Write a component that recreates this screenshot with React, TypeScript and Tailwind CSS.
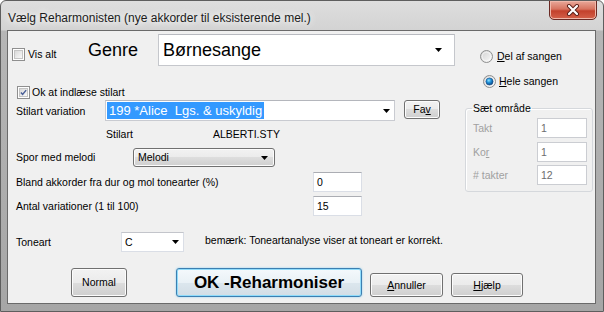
import React from 'react';

const ui = "font-['Liberation_Sans',Arial,sans-serif]";

const Arrow = () => (
  <svg width="7" height="4" viewBox="0 0 7 4" className="shrink-0">
    <path d="M0 0h7L3.5 4z" fill="#000" />
  </svg>
);

const Checkbox = ({ checked }: { checked?: boolean }) => (
  <div className="w-[13px] h-[13px] shrink-0 border border-[#8f8f8f] bg-white p-[1px]">
    <div className="w-full h-full border border-[#c4c4c4] bg-[linear-gradient(135deg,#d9d9d9,#f9f9f9)] flex items-center justify-center">
      {checked && (
        <svg width="9" height="9" viewBox="0 0 9 9">
          <path d="M1.2 4.4l2.2 2.6L7.9 1.4" stroke="#4a5f97" strokeWidth="1.9" fill="none" />
        </svg>
      )}
    </div>
  </div>
);

const Radio = ({ checked, id }: { checked?: boolean; id: string }) => (
  <svg width="13" height="13" viewBox="0 0 13 13" className="shrink-0">
    <defs>
      <linearGradient id={`${id}-bg`} x1="0" y1="0" x2="1" y2="1">
        <stop offset="0" stopColor="#d0d0d0" />
        <stop offset="1" stopColor="#fbfbfb" />
      </linearGradient>
      <radialGradient id={`${id}-dot`} cx="0.4" cy="0.35" r="0.7">
        <stop offset="0" stopColor="#8fe3ff" />
        <stop offset="0.45" stopColor="#1d8fd8" />
        <stop offset="1" stopColor="#0a3d7a" />
      </radialGradient>
    </defs>
    <circle cx="6.5" cy="6.5" r="6" fill={`url(#${id}-bg)`} stroke="#8e8f8f" />
    <circle cx="6.5" cy="6.5" r="4.3" fill="none" stroke="#ffffff" strokeWidth="0.8" opacity="0.7" />
    {checked && <circle cx="6.5" cy="6.5" r="3.6" fill={`url(#${id}-dot)`} stroke="#1a4f8a" strokeWidth="0.6" />}
  </svg>
);

const TextBox = ({ value, w, disabled }: { value: string; w: string; disabled?: boolean }) => (
  <div
    className={`${w} h-[20px] shrink-0 border bg-white pl-[3px] flex items-center leading-[13px] ${
      disabled
        ? 'border-[#cbcdd2] text-[#6d6d6d]'
        : 'border-[#dadee6] border-t-[#abadb3] text-black'
    }`}
  >
    {value}
  </div>
);

const Button = ({ children, className }: { children: React.ReactNode; className: string }) => (
  <div
    className={`${className} shrink-0 rounded-[3px] border border-[#707070] bg-[linear-gradient(#f2f2f2_0%,#ebebeb_50%,#dddddd_50%,#cfcfcf_100%)] shadow-[inset_0_0_0_1px_#fcfcfc] flex items-center justify-center leading-[13px]`}
  >
    {children}
  </div>
);

export default function App() {
  return (
    <div
      className={`w-[604px] h-[312px] flex flex-col overflow-hidden rounded-t-[6px] border border-[#5e5e5e] bg-[linear-gradient(180deg,#dedede_0px,#d3d3d3_29px,#b6b6b6_30px,#a6a6a6_100%)] ${ui} text-[10.5px] text-black`}
    >
      {/* title bar */}
      <div className="h-[29px] flex items-start shrink-0">
        <div className="pl-[7px] mt-[10px] text-[12px] leading-[14px] text-[#1b1b1b] [text-shadow:0_0_6px_#ffffff,0_0_10px_#ffffff]">
          Vælg Reharmonisten (nye akkorder til eksisterende mel.)
        </div>
        <div className="flex-1" />
        <div className="mr-[6px] -mt-[1px] w-[48px] h-[20px] rounded-b-[5px] border border-[#6b2a24] bg-[linear-gradient(#e9a99a_0%,#d7735f_45%,#c3412c_55%,#d4614a_100%)] shadow-[inset_0_0_0_1px_#f0b8aa] flex items-center justify-center">
          <svg width="14" height="12" viewBox="0 0 14 12">
            <path d="M3 2l8 8M11 2l-8 8" stroke="#5a1f18" strokeWidth="4" strokeLinecap="round" />
            <path d="M3 2l8 8M11 2l-8 8" stroke="#ffffff" strokeWidth="2.2" strokeLinecap="round" />
          </svg>
        </div>
      </div>

      {/* client area */}
      <div className="ml-[6px] mr-[7px] mb-[7px] flex-1 border border-[#6a6a6a] bg-[#f0f0f0] flex flex-col">
        <div className="flex">
          {/* left column */}
          <div className="w-[458px] flex flex-col">
            <div className="mt-[3px] h-[32px] flex items-start">
              <div className="w-[76px] ml-[4px] mt-[14px] flex items-center gap-[3px]">
                <Checkbox />
                <span className="leading-[13px]">Vis alt</span>
              </div>
              <div className="w-[70px] mt-[6px] text-[18px] leading-[20px]">Genre</div>
              <div className="w-[297px] h-[32px] border border-[#c5c7cc] border-t-[#b8bac0] bg-white flex items-center pl-[4px] pr-[12px]">
                <span className="flex-1 text-[18px] leading-[20px]">Børnesange</span>
                <Arrow />
              </div>
            </div>

            <div className="mt-[20px] ml-[9px] h-[13px] flex items-center gap-[2px]">
              <Checkbox checked />
              <span className="leading-[13px]">Ok at indlæse stilart</span>
            </div>

            <div className="mt-[1px] h-[21px] flex items-start">
              <div className="w-[97px] pl-[8px] mt-[5px] leading-[13px]">Stilart variation</div>
              <div className="w-[290px] h-[21px] border border-[#c9cbd1] border-t-[#b4b6bc] bg-white flex items-center pl-[1px] pr-[4px]">
                <div className="flex-1">
                  <span className="inline-block h-[17px] px-[2px] bg-[#3399ff] text-white text-[13px] leading-[17px] whitespace-pre">
                    199 *Alice  Lgs. &amp; uskyldig
                  </span>
                </div>
                <Arrow />
              </div>
              <Button className="ml-[9px] w-[36px] h-[19px]">
                <span>
                  Fa<span className="underline underline-offset-[1px]">v</span>
                </span>
              </Button>
            </div>

            <div className="mt-[7px] h-[13px] flex leading-[13px]">
              <span className="ml-[98px] w-[107px]">Stilart</span>
              <span>ALBERTI.STY</span>
            </div>

            <div className="mt-[7px] h-[19px] flex items-center">
              <div className="w-[125px] pl-[8px] leading-[13px]">Spor med melodi</div>
              <div className="w-[142px] h-[19px] rounded-[3px] border border-[#707070] bg-[linear-gradient(#f2f2f2_0%,#ebebeb_50%,#dddddd_50%,#cfcfcf_100%)] shadow-[inset_0_0_0_1px_#fcfcfc] flex items-center pl-[4px] pr-[6px]">
                <span className="flex-1 leading-[13px]">Melodi</span>
                <Arrow />
              </div>
            </div>

            <div className="mt-[5px] h-[20px] flex items-center">
              <div className="w-[305px] pl-[8px] leading-[13px]">Bland akkorder fra dur og mol tonearter (%)</div>
              <TextBox value="0" w="w-[49px]" />
            </div>

            <div className="mt-[4px] h-[20px] flex items-center">
              <div className="w-[305px] pl-[8px] leading-[13px]">Antal variationer (1 til 100)</div>
              <TextBox value="15" w="w-[49px]" />
            </div>
          </div>

          {/* right column */}
          <div className="w-[129px] flex flex-col">
            <div className="mt-[19px] ml-[14px] h-[13px] flex items-center gap-[4px]">
              <Radio id="r1" />
              <span className="leading-[13px]">
                <span className="underline underline-offset-[1px]">D</span>el af sangen
              </span>
            </div>
            <div className="mt-[12px] ml-[17px] h-[13px] flex items-center gap-[3px]">
              <Radio id="r2" checked />
              <span className="leading-[13px]">
                <span className="underline underline-offset-[1px]">H</span>ele sangen
              </span>
            </div>

            <fieldset className="mt-[13px] -ml-[1px] w-[128px] rounded-[3px] border border-[#d5d8dc] shadow-[inset_1px_1px_0_#ffffff] pb-[6px]">
              <legend className="ml-[6px] px-[1px] leading-[14px]">Sæt område</legend>
              <div className="mt-[3px] h-[20px] flex items-center pl-[7px]">
                <span className="w-[64px] leading-[13px] text-[#a0a0a0]">Takt</span>
                <TextBox value="1" w="w-[50px]" disabled />
              </div>
              <div className="mt-[4px] h-[20px] flex items-center pl-[7px]">
                <span className="w-[64px] leading-[13px] text-[#a0a0a0]">
                  Ko<span className="underline underline-offset-[1px]">r</span>
                </span>
                <TextBox value="1" w="w-[50px]" disabled />
              </div>
              <div className="mt-[3px] h-[20px] flex items-center pl-[7px]">
                <span className="w-[64px] leading-[13px] text-[#a0a0a0]"># takter</span>
                <TextBox value="12" w="w-[50px]" disabled />
              </div>
            </fieldset>
          </div>
        </div>

        {/* toneart */}
        <div className="mt-[16px] h-[20px] flex items-start">
          <div className="w-[113px] pl-[8px] mt-[4px] leading-[13px]">Toneart</div>
          <div className="w-[63px] h-[20px] border border-[#dadee6] border-t-[#c3c5cb] bg-white flex items-center pl-[3px] pr-[4px]">
            <span className="flex-1 leading-[13px]">C</span>
            <Arrow />
          </div>
          <div className="ml-[21px] mt-[2px] leading-[13px]">bemærk: Toneartanalyse viser at toneart er korrekt.</div>
        </div>

        {/* buttons */}
        <div className="mt-[16px] h-[29px] flex items-end">
          <Button className="ml-[63px] w-[56px] h-[29px]">Normal</Button>
          <div className="ml-[49px] w-[186px] h-[29px] shrink-0 rounded-[3px] border border-[#3c7fb1] bg-[linear-gradient(#f4f9fc_0%,#e9f1f6_50%,#dce7ee_50%,#d2dde5_100%)] shadow-[inset_0_0_0_1px_#8fdcfb,0_0_2px_#7ecbf1] flex items-center justify-center text-[17px] font-bold leading-[20px]">
            OK -Reharmoniser
          </div>
          <Button className="ml-[8px] w-[73px] h-[24px]">
            <span>
              <span className="underline underline-offset-[1px]">A</span>nnuller
            </span>
          </Button>
          <Button className="ml-[8px] w-[72px] h-[24px]">
            <span>
              <span className="underline underline-offset-[1px]">H</span>jælp
            </span>
          </Button>
        </div>
      </div>
    </div>
  );
}
